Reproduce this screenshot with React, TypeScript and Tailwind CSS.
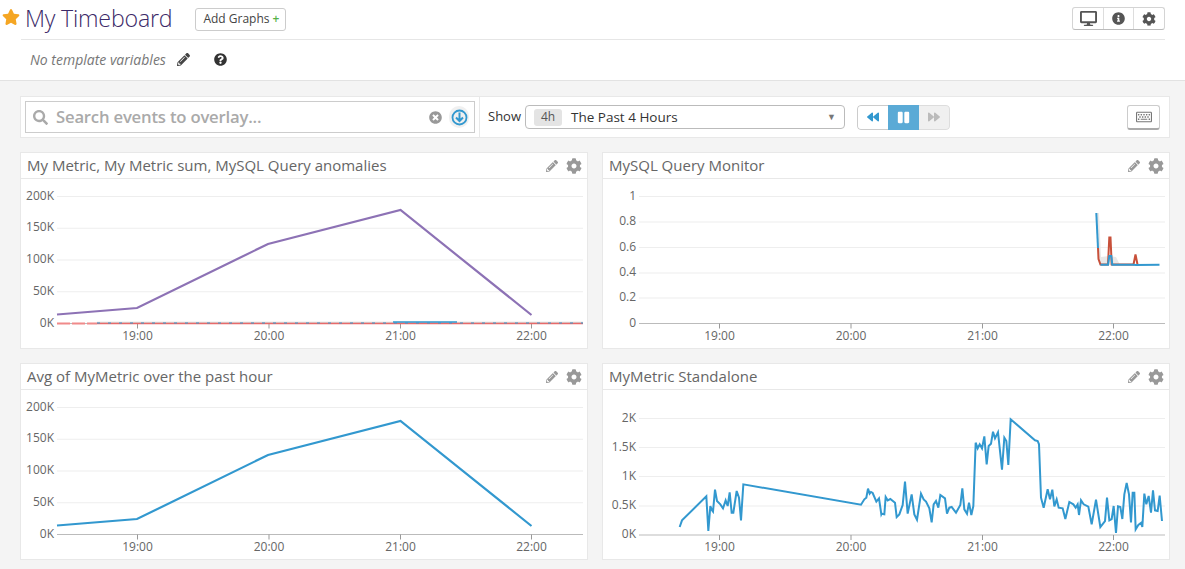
import React from 'react';
import {
  FaStar, FaPencilAlt, FaQuestionCircle, FaCog, FaDesktop, FaInfoCircle,
  FaBackward, FaPause, FaForward, FaRegKeyboard, FaSearch, FaTimesCircle,
} from 'react-icons/fa';

const TICKS_LEFT = [136.5, 268, 399.5, 530.5];
const TICKS_RIGHT = [718.5, 850, 981.5, 1112.5];
const LABELS = ['19:00', '20:00', '21:00', '22:00'];

// traced from the picture, in zoomed crop pixels
const standaloneA = [[236,408],[243,388],[316,316],[322,420],[328,345],[333,358],[336,362],[342,296],[348,330],[358,340],[366,352],[374,328],[380,345],[386,304],[392,365],[397,365],[407,300],[414,320],[420,388],[427,280],[780,341],[790,325],[796,320],[801,293],[806,308],[810,303],[815,306],[826,332],[834,322],[841,370]];
const standaloneB = [[2,368],[10,370],[14,318],[20,328],[28,324],[42,335],[47,378],[55,370],[65,342],[72,272],[80,368],[92,310],[100,370],[108,386],[120,308],[128,325],[135,332],[145,352],[152,394],[158,340],[165,330],[172,350],[178,312],[192,322],[198,368],[205,350],[212,348],[225,365],[238,342],[244,292],[250,355],[258,368],[264,335],[271,372],[277,345],[284,155],[290,172],[296,160],[303,172],[310,136],[317,220],[323,165],[330,158],[336,122],[342,142],[351,124],[363,236],[370,140],[376,150],[382,222],[389,85],[462,148],[470,150],[474,160],[480,320],[488,350],[500,295],[507,325],[514,296],[520,346],[527,325],[533,350],[545,352],[553,384],[565,333],[577,340],[584,350],[590,340],[594,372],[600,328],[608,340],[622,347],[632,400],[645,326],[658,408],[672,390],[678,320],[685,388],[692,384],[698,345],[705,426],[711,346],[718,348],[724,384],[730,310],[737,276],[744,310],[750,394],[755,305],[760,305],[764,415],[772,402],[780,396],[784,408],[790,308],[796,340],[803,315],[810,365],[816,298],[822,358],[830,360],[836,314],[843,390]];

const standalonePoints = [
  ...standaloneA.map(([x, y]) => `${x / 3 + 600},${y / 3 + 390}`),
  ...standaloneB.map(([x, y]) => `${x / 3 + 880},${y / 3 + 390}`),
].join(' ');

function Axis({ x0, x1, ticks, yLabels, base }: { x0: number; x1: number; ticks: number[]; yLabels: [string, number][]; base: number }) {
  return (
    <g fontFamily='"Open Sans", sans-serif' fontSize="12" fill="#666">
      {yLabels.map(([label, y], i) => (
        <g key={label}>
          <line x1={x0} x2={x1} y1={y} y2={y} stroke={i === yLabels.length - 1 ? '#bbb' : '#eee'} strokeWidth="1.2" />
          <text x={x0 - 3} y={y + 3} textAnchor="end">{label}</text>
        </g>
      ))}
      {ticks.map((t, i) => (
        <g key={t}>
          <line x1={t} x2={t} y1={base} y2={base + 5} stroke="#999" />
          <text x={t} y={base + 16} textAnchor="middle">{LABELS[i]}</text>
        </g>
      ))}
    </g>
  );
}

function Widget({ title, viewBox, children }: { title: string; viewBox: string; children: React.ReactNode }) {
  return (
    <div className="h-[197px] bg-white border border-[#e8e8e8] flex flex-col">
      <div className="h-[26px] shrink-0 border-b border-[#e8e8e8] flex items-center justify-between pl-[6px] pr-[5px]">
        <span className="text-[15px] text-[#666] leading-none">{title}</span>
        <div className="flex items-center gap-[8px] text-[#999]">
          <FaPencilAlt size={12} />
          <FaCog size={16} />
        </div>
      </div>
      <svg viewBox={viewBox} className="w-[566px] h-[169px] block">{children}</svg>
    </div>
  );
}

export default function App() {
  const kLabels = (base: number): [string, number][] =>
    ['200K', '150K', '100K', '50K', '0K'].map((l, i) => [l, base + i * 31.75]);

  return (
    <div className="w-[1185px] h-[569px] overflow-hidden bg-[#f4f4f4] font-['Open_Sans',sans-serif] text-[#444]">
      {/* Header */}
      <div className="h-[81px] bg-white border-b border-[#e2e2e2]">
        <div className="h-[39px] flex items-center justify-between pl-[2px] pr-[20px]">
          <div className="flex items-center">
            <FaStar size={18} className="text-[#f5a623] mb-[5px]" />
            <span className="ml-[5px] text-[23.2px] leading-none font-light text-[#3c2a68] tracking-[-0.2px] mb-[1px]">My Timeboard</span>
            <div className="ml-[23px] h-[23px] pl-[7px] pr-[6px] border border-[#ccc] rounded-[3px] flex items-center text-[12px] text-[#444]">
              Add Graphs <span className="ml-[3px] text-[#55b045] font-semibold">+</span>
            </div>
          </div>
          <div className="flex h-[23px] border border-[#d4d4d4] border-b-[#bbb] rounded-[3px] text-[#555] mb-[2px]">
            <div className="w-[31px] flex items-center justify-center border-r border-[#ddd]"><FaDesktop size={17} /></div>
            <div className="w-[30px] flex items-center justify-center border-r border-[#ddd]"><FaInfoCircle size={13} /></div>
            <div className="w-[30px] flex items-center justify-center"><FaCog size={14} /></div>
          </div>
        </div>
        <div className="ml-[21px] mr-[20px] border-t border-[#e6e6e6] h-[40px] flex items-center pl-[9px]">
          <span className="text-[14px] italic text-[#777]">No template variables</span>
          <FaPencilAlt size={13} className="ml-[11px] text-[#444]" />
          <FaQuestionCircle size={13} className="ml-[24px] text-[#333]" />
        </div>
      </div>

      {/* Toolbar */}
      <div className="mt-[15px] ml-[20px] mr-[15px] h-[42px] bg-white border border-[#e8e8e8] flex items-center">
        <div className="ml-[4px] w-[450px] h-[32px] border border-[#ccc] flex items-center pl-[7px] pr-[5px] shrink-0">
          <FaSearch size={15} className="text-[#aaa]" />
          <span className="ml-[8px] text-[16.7px] text-[#aaa] flex-1 font-semibold tracking-[-0.2px]">Search events to overlay...</span>
          <FaTimesCircle size={13} className="text-[#999]" />
          <div className="ml-[7px] w-[20px] h-[22px] rounded-full bg-[#f0f0f0] flex items-center justify-center">
            <svg width="17" height="17" viewBox="0 0 17 17" fill="none" stroke="#3298cf" strokeWidth="1.8">
              <circle cx="8.5" cy="8.5" r="7" />
              <path d="M8.5 3.5V12M5 8.5l3.5 3.5L12 8.5" strokeWidth="2" />
            </svg>
          </div>
        </div>
        <div className="ml-[4px] w-px h-[40px] bg-[#e8e8e8]" />
        <span className="ml-[8px] text-[13px] text-[#333]">Show</span>
        <div className="ml-[4px] w-[320px] h-[24px] border border-[#bbb] rounded-[4px] flex items-center pl-[8px] pr-[8px]">
          <span className="h-[17px] w-[28px] bg-[#e4e4e4] rounded-[3px] text-[12px] text-[#555] flex items-center justify-center">4h</span>
          <span className="ml-[9px] text-[13.5px] text-[#333] flex-1">The Past 4 Hours</span>
          <span className="text-[9px] text-[#777]">▼</span>
        </div>
        <div className="ml-[12px] flex h-[25px] w-[93px] rounded-[4px] overflow-hidden">
          <div className="w-[31px] border border-[#ccc] border-r-0 rounded-l-[4px] flex items-center justify-center text-[#3298cf]"><FaBackward size={12} /></div>
          <div className="w-[31px] bg-[#5aaad6] flex items-center justify-center text-white"><FaPause size={13} /></div>
          <div className="w-[31px] bg-[#f0f0f0] border border-[#ddd] border-l-0 rounded-r-[4px] flex items-center justify-center text-[#bbb]"><FaForward size={12} /></div>
        </div>
        <div className="ml-auto mr-[9px] w-[33px] h-[25px] border border-[#ccc] border-b-2 border-b-[#aaa] rounded-[3px] flex items-center justify-center text-[#777]">
          <FaRegKeyboard size={16} />
        </div>
      </div>

      {/* Widgets */}
      <div className="mt-[14px] ml-[20px] grid grid-cols-[568px_568px] gap-x-[14px] gap-y-[14px]">
        <Widget title="My Metric, My Metric sum, MySQL Query anomalies" viewBox="20 178 566 169">
          <Axis x0={56} x1={582} ticks={TICKS_LEFT} yLabels={kLabels(195.5)} base={322.5} />
          <line x1={96} x2={582} y1={321.5} y2={321.5} stroke="#d8d8d8" strokeWidth="1.5" />
          <line x1={56} x2={96} y1={322.5} y2={322.5} stroke="#f08a8a" strokeWidth="2" strokeDasharray="13 2" />
          <line x1={96} x2={582} y1={322.5} y2={322.5} stroke="#e86a6a" strokeWidth="1.5" />
          <line x1={96} x2={582} y1={322} y2={322} stroke="#3298cf" strokeWidth="1" strokeDasharray="3 8" />
          <line x1={392} x2={456} y1={321} y2={321} stroke="#3298cf" strokeWidth="1.5" />
          <polyline points="56,313.5 136,307 267,243 399.5,209 530.5,314" fill="none" stroke="#8d72b5" strokeWidth="2.2" />
        </Widget>

        <Widget title="MySQL Query Monitor" viewBox="602 178 566 169">
          <Axis x0={638} x1={1164} ticks={TICKS_RIGHT} base={322.5}
            yLabels={[['1', 195.5], ['0.8', 221], ['0.6', 246.5], ['0.4', 272], ['0.2', 297], ['0', 322.5]]} />
          <polygon points="1095,212 1098,212 1100,256 1108,255 1115,256 1119,264 1098,264" fill="#e8e8e8" />
          <polyline points="1097,247 1097.5,258 1099.5,263.5 1107,263.5 1108.3,236.5 1109.5,236.5 1110.7,263.5 1132.5,263.5 1134.5,253.5 1136.5,263.5" fill="none" stroke="#c8503a" strokeWidth="2" />
          <polyline points="1095.3,212 1097,247" fill="none" stroke="#3298cf" strokeWidth="2" />
          <polyline points="1099.5,263.7 1107,263.7 1108.3,255 1110.3,255 1111.3,263.7 1132,263.7 1135,264 1158.5,263.7" fill="none" stroke="#3298cf" strokeWidth="2" />
        </Widget>

        <Widget title="Avg of MyMetric over the past hour" viewBox="20 389 566 169">
          <Axis x0={56} x1={582} ticks={TICKS_LEFT} yLabels={kLabels(406.5)} base={533.5} />
          <polyline points="56,524.5 136,518 267,454 399.5,420 530.5,525" fill="none" stroke="#3298cf" strokeWidth="2.2" />
        </Widget>

        <Widget title="MyMetric Standalone" viewBox="602 389 566 169">
          <Axis x0={638} x1={1164} ticks={TICKS_RIGHT} base={534}
            yLabels={[['2K', 417.5], ['1.5K', 446.5], ['1K', 475.5], ['0.5K', 505], ['0K', 534]]} />
          <polyline points={standalonePoints} fill="none" stroke="#3298cf" strokeWidth="2" />
        </Widget>
      </div>
    </div>
  );
}
